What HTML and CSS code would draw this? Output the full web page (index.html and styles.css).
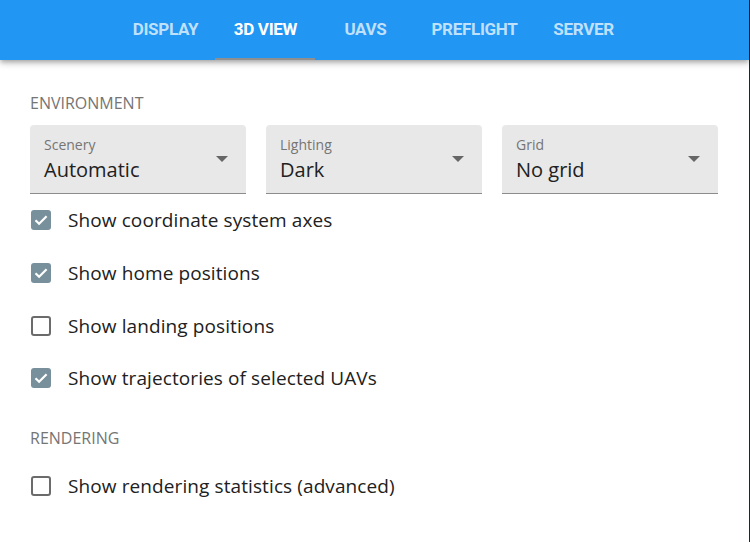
FILE: index.html
```html
<!DOCTYPE html>
<html>
<head>
<meta charset="utf-8">
<link rel="stylesheet" href="styles.css">
</head>
<body>
<div class="dialog">
  <header class="appbar">
    <nav class="tabs">
      <div class="tab">DISPLAY</div>
      <div class="tab active">3D VIEW</div>
      <div class="tab">UAVS</div>
      <div class="tab">PREFLIGHT</div>
      <div class="tab">SERVER</div>
    </nav>
  </header>
  <main class="content">
    <div class="section-title">ENVIRONMENT</div>
    <div class="selects">
      <div class="field">
        <div class="field-text">
          <div class="field-label">Scenery</div>
          <div class="field-value">Automatic</div>
        </div>
        <span class="arrow"></span>
      </div>
      <div class="field">
        <div class="field-text">
          <div class="field-label">Lighting</div>
          <div class="field-value">Dark</div>
        </div>
        <span class="arrow"></span>
      </div>
      <div class="field">
        <div class="field-text">
          <div class="field-label">Grid</div>
          <div class="field-value">No grid</div>
        </div>
        <span class="arrow"></span>
      </div>
    </div>
    <div class="check-row"><span class="box checked"><svg viewBox="0 0 20 20" width="20" height="20"><path d="M4.5 10.2l3.6 3.6L15.6 6.3" fill="none" stroke="#fff" stroke-width="2.2"/></svg></span><span class="check-label">Show coordinate system axes</span></div>
    <div class="check-row"><span class="box checked"><svg viewBox="0 0 20 20" width="20" height="20"><path d="M4.5 10.2l3.6 3.6L15.6 6.3" fill="none" stroke="#fff" stroke-width="2.2"/></svg></span><span class="check-label">Show home positions</span></div>
    <div class="check-row"><span class="box"></span><span class="check-label">Show landing positions</span></div>
    <div class="check-row"><span class="box checked"><svg viewBox="0 0 20 20" width="20" height="20"><path d="M4.5 10.2l3.6 3.6L15.6 6.3" fill="none" stroke="#fff" stroke-width="2.2"/></svg></span><span class="check-label">Show trajectories of selected UAVs</span></div>
    <div class="section-title section-gap">RENDERING</div>
    <div class="check-row"><span class="box"></span><span class="check-label">Show rendering statistics (advanced)</span></div>
  </main>
</div>
</body>
</html>
```
FILE: styles.css
```css
html, body {
  margin: 0;
  padding: 0;
}
body {
  background: #1c2727;
  width: 750px;
  height: 542px;
  overflow: hidden;
  font-family: "Open Sans", "Noto Sans", sans-serif;
}
.dialog {
  width: 749px;
  height: 542px;
  background: #ffffff;
}
.appbar {
  height: 60px;
  background: #2196f3;
  box-shadow: 0 2px 4px -1px rgba(0,0,0,0.2), 0 4px 5px 0 rgba(0,0,0,0.14), 0 1px 10px 0 rgba(0,0,0,0.12);
  position: relative;
  z-index: 1;
}
.tabs {
  display: flex;
  justify-content: center;
  height: 60px;
}
.tab {
  min-width: 100px;
  padding: 0 16px 3px 16px;
  box-sizing: border-box;
  display: flex;
  align-items: center;
  justify-content: center;
  font-family: "Roboto", sans-serif;
  font-weight: 700;
  font-size: 17px;
  letter-spacing: -0.3px;
  color: rgba(255,255,255,0.72);
}
.tab.active {
  color: #ffffff;
  box-shadow: inset 0 -2px 0 #8f8f8f;
}
.content {
  padding: 31px 30px 0 30px;
}
.section-title {
  font-size: 16px;
  line-height: 24px;
  color: #757575;
  margin-bottom: 10px;
}
.section-gap {
  margin-top: 21px;
}
.selects {
  display: flex;
  gap: 20px;
}
.field {
  width: 216px;
  height: 68px;
  background: #e8e8e8;
  border-radius: 4px 4px 0 0;
  border-bottom: 1px solid #8c8c8c;
  display: flex;
  align-items: center;
  box-sizing: content-box;
}
.field-text {
  flex: 1;
  padding-left: 14px;
  padding-top: 1px;
}
.field-label {
  font-size: 14px;
  line-height: 18px;
  color: #757575;
  margin-bottom: 3px;
}
.field-value {
  font-size: 20px;
  line-height: 26px;
  color: #212121;
}
.arrow {
  width: 0;
  height: 0;
  border-left: 6px solid transparent;
  border-right: 6px solid transparent;
  border-top: 6px solid #666666;
  margin-right: 18px;
}
.check-row {
  height: 52.67px;
  display: flex;
  align-items: center;
  padding-left: 1px;
}
.box {
  width: 20px;
  height: 20px;
  box-sizing: border-box;
  border: 2px solid #6b6b6b;
  border-radius: 3px;
  margin-right: 17px;
  flex: none;
  display: flex;
}
.box.checked {
  border: none;
  background: #78909c;
}
.check-label {
  font-size: 19px;
  letter-spacing: 0.1px;
  color: #212121;
}
```
